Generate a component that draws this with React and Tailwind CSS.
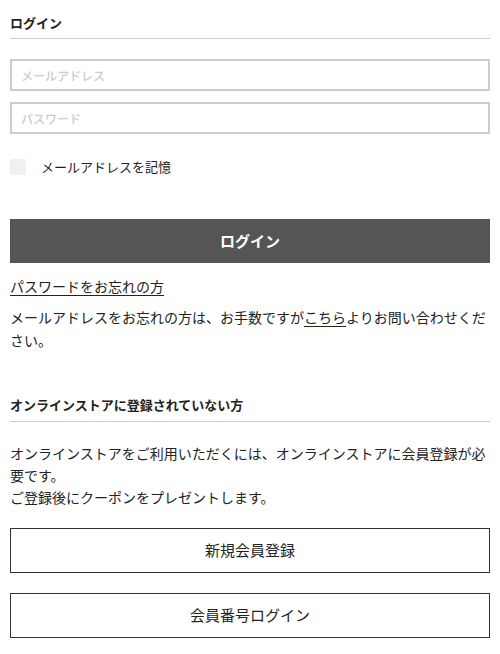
import React, { useState } from 'react';

const font = "font-['Noto_Sans_CJK_JP','Noto_Sans',sans-serif]";

const App = () => {
  const [remember, setRemember] = useState(false);

  return (
    <div className={`w-[500px] min-h-[654px] bg-white px-[10px] text-[#333] ${font}`}>
      {/* ログイン */}
      <h2 className="pt-[13px] pb-[5px] text-[13px] leading-[20px] font-bold text-[#222] border-b border-[#ccc]">ログイン</h2>

      <input
        type="email"
        placeholder="メールアドレス"
        className="mt-[20px] block w-full h-[32px] border-2 border-[#ccc] px-[9px] text-[12px] outline-none placeholder:text-[#ccc] placeholder:font-medium"
      />
      <input
        type="password"
        placeholder="パスワード"
        className="mt-[11px] block w-full h-[32px] border-2 border-[#ccc] px-[9px] text-[12px] outline-none placeholder:text-[#ccc] placeholder:font-medium"
      />

      <label className="mt-[25px] flex items-center gap-[15px] cursor-pointer">
        <span
          onClick={() => setRemember(!remember)}
          className={`w-[16px] h-[16px] rounded-[2px] ${remember ? 'bg-[#555]' : 'bg-[#f0f0f0]'}`}
        ></span>
        <span className="text-[13px] leading-[16px] text-[#222]">メールアドレスを記憶</span>
      </label>

      <button className="mt-[44px] block w-full h-[44px] bg-[#555] text-white text-[15px] font-bold">ログイン</button>

      <a href="#" className="mt-[12px] inline-block text-[14px] leading-[23px] text-[#222] underline underline-offset-[3px]">パスワードをお忘れの方</a>
      <p className="mt-[8px] text-[14px] leading-[23px] text-[#222]">
        メールアドレスをお忘れの方は、お手数ですが<a href="#" className="underline underline-offset-[3px]">こちら</a>よりお問い合わせください。
      </p>

      {/* 未登録 */}
      <h2 className="mt-[43px] pb-[6px] text-[13px] leading-[20px] font-bold text-[#222] border-b border-[#ccc]">オンラインストアに登録されていない方</h2>
      <p className="mt-[20px] text-[14px] leading-[22px] text-[#222]">
        オンラインストアをご利用いただくには、オンラインストアに会員登録が必要です。<br />
        ご登録後にクーポンをプレゼントします。
      </p>

      <button className="mt-[20px] block w-full h-[45px] border border-[#333] bg-white text-[15px] text-[#222]">新規会員登録</button>
      <button className="mt-[20px] block w-full h-[45px] border border-[#333] bg-white text-[15px] text-[#222]">会員番号ログイン</button>
    </div>
  );
};

export default App;
